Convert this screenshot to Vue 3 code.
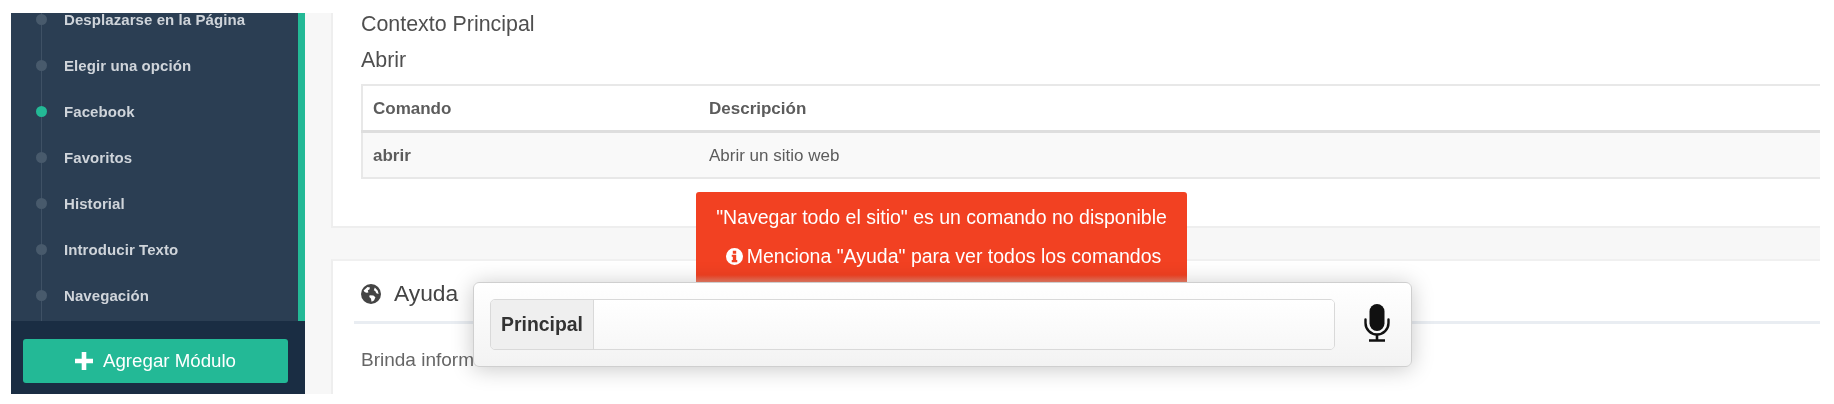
<script setup>
const items = [
  { label: 'Desplazarse en la Página' },
  { label: 'Elegir una opción' },
  { label: 'Facebook', active: true },
  { label: 'Favoritos' },
  { label: 'Historial' },
  { label: 'Introducir Texto' },
  { label: 'Navegación' }
]
</script>

<template>
  <div class="frame">
    <aside class="sidebar">
      <nav class="nav">
        <ul class="timeline">
          <li v-for="item in items" :key="item.label" class="step" :class="{ active: item.active }">
            <span class="dot"></span>
            <span>{{ item.label }}</span>
          </li>
        </ul>
      </nav>
      <div class="foot">
        <button class="add" type="button">
          <svg width="18" height="18" viewBox="0 0 18 18" aria-hidden="true">
            <path d="M6.7 0h4.6v6.7H18v4.6h-6.7V18H6.7v-6.7H0V6.7h6.7z" fill="#fff" />
          </svg>
          <span>Agregar Módulo</span>
        </button>
      </div>
    </aside>

    <main class="main">
      <section class="card first">
        <h4 class="ctx">Contexto Principal</h4>
        <h4 class="sub">Abrir</h4>
        <table class="cmds">
          <thead>
            <tr><th class="c1">Comando</th><th>Descripción</th></tr>
          </thead>
          <tbody>
            <tr><td class="c1 strong">abrir</td><td>Abrir un sitio web</td></tr>
          </tbody>
        </table>
      </section>

      <section class="card second">
        <header class="help">
          <svg width="20" height="20" viewBox="0 0 20 20" aria-hidden="true">
            <circle cx="10" cy="10" r="10" fill="#444" />
            <path d="M2.6 6.5 6.5 3 9 3.6 8.4 5.6 6.8 6.2 7.4 8.4 5.4 8.8 3.6 8ZM8.6 11.2l3.8.2 2 1.8-1.4 3.2-2.4 1.4-.7-3.2-1.6-1.5ZM13.8 3.6l3 3.2.8 3.2-2.2-.7-1.2-2.2-1.4-.9Z" fill="#fff" />
          </svg>
          <span>Ayuda</span>
        </header>
        <p class="desc">Brinda información</p>
      </section>
    </main>

    <div class="toast">
      <p>"Navegar todo el sitio" es un comando no disponible</p>
      <p class="hint">
        <svg width="17" height="17" viewBox="0 0 16 16" aria-hidden="true">
          <path fill-rule="evenodd" fill="#fff" d="M8 0a8 8 0 1 1 0 16A8 8 0 0 1 8 0ZM6.4 2.6v2.7h3.2V2.6ZM5.4 6.4v1.8h1v3.2h-1v2h5.2v-2h-1v-5Z" />
        </svg>
        <span>Menciona "Ayuda" para ver todos los comandos</span>
      </p>
    </div>

    <div class="voice">
      <div class="field">
        <span class="addon">Principal</span>
        <span class="input"></span>
      </div>
      <svg class="mic" width="26" height="38" viewBox="0 0 26 38" aria-hidden="true">
        <rect x="5.5" y="0" width="15" height="27" rx="7.5" fill="#111" />
        <path d="M1.5 15.5v3.5a11.5 11.5 0 0 0 23 0v-3.5" fill="none" stroke="#111" stroke-width="2.4" stroke-linecap="round" />
        <path d="M13 30.5v5M5 36.5h16" fill="none" stroke="#111" stroke-width="2.6" />
      </svg>
    </div>
  </div>
</template>

<style scoped>
.frame {
  position: relative;
  display: flex;
  box-sizing: border-box;
  width: 1809px;
  height: 381px;
  margin: 13px 0 0 11px;
  overflow: hidden;
  font-family: "Liberation Sans", Arial, sans-serif;
  color: #555;
  filter: blur(0.45px);
}
.sidebar {
  flex: 0 0 294px;
  display: flex;
  flex-direction: column;
  background: #2b3e53;
}
.nav {
  position: relative;
  flex: 0 0 308px;
  overflow: hidden;
  box-sizing: border-box;
  border-right: 7px solid #23b996;
}
.nav::before {
  content: "";
  position: absolute;
  left: 29.5px;
  top: 0;
  bottom: 0;
  width: 1px;
  background: #3f5165;
}
.timeline {
  list-style: none;
  margin: -17px 0 0;
  padding: 0;
}
.step {
  position: relative;
  display: flex;
  align-items: center;
  height: 46px;
  padding-left: 53px;
  font-size: 15px;
  font-weight: 700;
  letter-spacing: 0.08px;
  color: #cfd4da;
}
.dot {
  position: absolute;
  left: 25px;
  top: 18px;
  width: 11px;
  height: 11px;
  border-radius: 50%;
  background: #485a6c;
}
.active .dot {
  background: #23b996;
}
.foot {
  flex: 1;
  display: flex;
  align-items: flex-start;
  padding: 18px 17px 0 12px;
  background: #1a2d43;
}
.add {
  display: flex;
  align-items: center;
  justify-content: center;
  gap: 10px;
  width: 100%;
  height: 44px;
  border: 0;
  border-radius: 3px;
  background: #23b996;
  color: #fff;
  font: 18.7px "Liberation Sans", Arial, sans-serif;
  padding: 0;
}
.main {
  flex: 1;
  display: flex;
  flex-direction: column;
  padding-left: 26px;
  background: #f7f7f7;
}
.card {
  box-sizing: border-box;
  background: #fff;
  border-left: 2px solid #eeeeee;
}
.first {
  flex: 0 0 215px;
  padding-left: 28px;
  border-bottom: 2px solid #eeeeee;
}
.ctx,
.sub {
  margin: 0;
  font-size: 21.4px;
  font-weight: 400;
  line-height: 22px;
  color: #4f4f4f;
}
.sub {
  margin-top: 14px;
}
.cmds {
  width: 100%;
  margin-top: 13px;
  border-collapse: collapse;
  border: 2px solid #e8e8e8;
  border-right: 0;
  font-size: 17px;
  color: #5c5c5c;
}
.cmds th,
.cmds td {
  padding: 2px 0 0 10px;
  text-align: left;
}
.cmds th {
  height: 42px;
  font-weight: 700;
  border-bottom: 3px solid #dedede;
}
.cmds td {
  height: 42px;
  background: #f9f9f9;
}
.c1 {
  width: 326px;
}
.strong {
  font-weight: 700;
}
.second {
  flex: 1;
  margin-top: 31px;
  padding-left: 21px;
  border-top: 2px solid #f0f0f0;
}
.help {
  display: flex;
  align-items: center;
  gap: 13px;
  box-sizing: border-box;
  height: 63px;
  padding: 5px 0 0 7px;
  border-bottom: 3px solid #e9edf2;
  font-size: 22.8px;
  color: #444;
}
.desc {
  margin: 0;
  padding: 25px 0 0 7px;
  font-size: 19px;
  line-height: 22px;
  color: #666;
}
.toast {
  position: absolute;
  left: 685px;
  top: 179px;
  box-sizing: border-box;
  width: 491px;
  height: 92px;
  border-radius: 3px 3px 0 0;
  background: linear-gradient(#f24122 calc(100% - 9px), #ea8f7a);
  color: #fff;
  font-size: 19.5px;
  text-align: center;
}
.toast p {
  display: flex;
  align-items: center;
  justify-content: center;
  gap: 4px;
  height: 39px;
  margin: 0;
}
.toast p:first-child {
  margin-top: 6px;
}
.toast .hint {
  padding-left: 4px;
}
.voice {
  position: absolute;
  left: 462px;
  top: 269px;
  box-sizing: border-box;
  display: flex;
  align-items: center;
  width: 939px;
  height: 85px;
  padding: 0 21px 0 16px;
  justify-content: space-between;
  border: 1px solid #cfcfcf;
  border-radius: 6px;
  background: linear-gradient(#ffffff, #f3f3f3);
  box-shadow: 0 2px 22px rgba(0, 0, 0, 0.22);
}
.field {
  display: flex;
  box-sizing: border-box;
  width: 845px;
  height: 51px;
  border: 1px solid #d9d9d9;
  border-radius: 5px;
  overflow: hidden;
}
.addon {
  display: flex;
  align-items: center;
  justify-content: center;
  box-sizing: border-box;
  width: 103px;
  background: #efefef;
  border-right: 1px solid #d9d9d9;
  font-size: 19.4px;
  font-weight: 700;
  color: #333;
}
.input {
  flex: 1;
  background: linear-gradient(#ffffff, #f7f7f7);
}
.mic {
  flex: none;
  margin-bottom: 3px;
}
</style>

<style>
html,
body {
  margin: 0;
  background: #fff;
}
</style>
